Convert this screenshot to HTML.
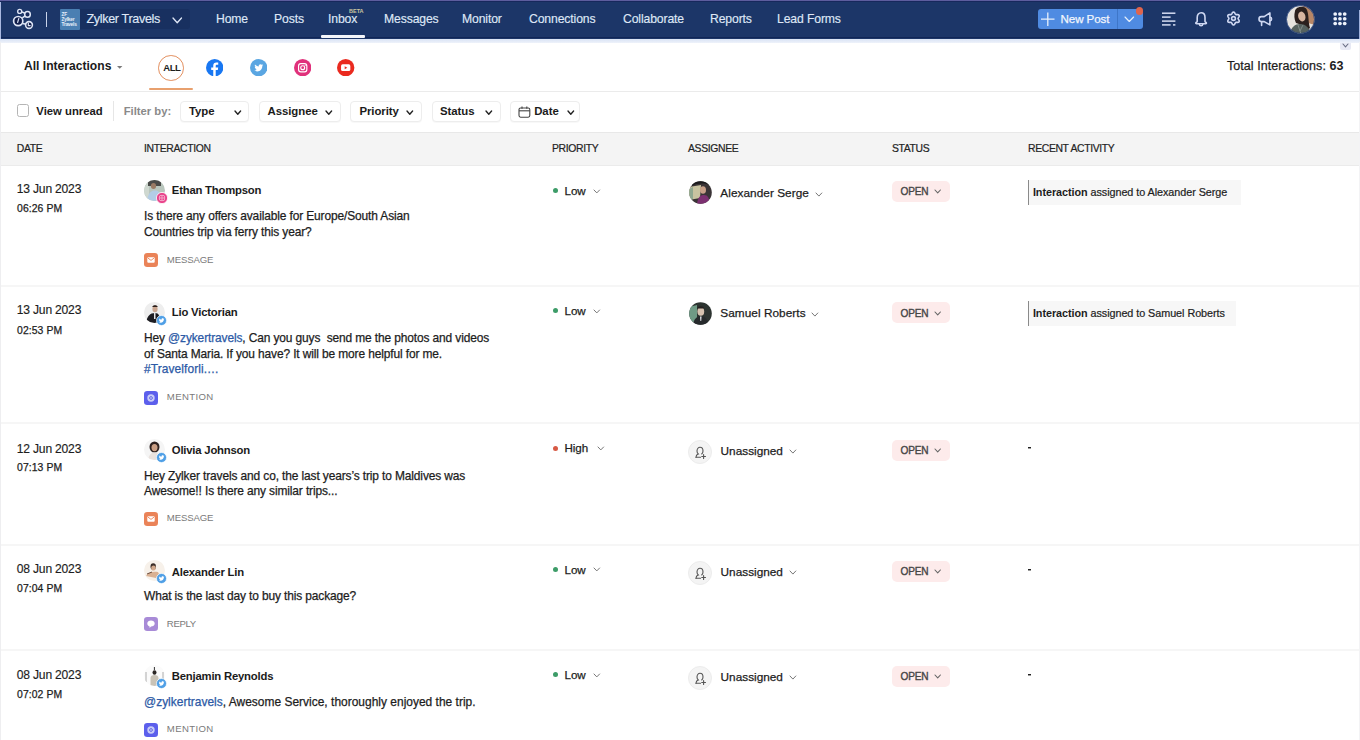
<!DOCTYPE html>
<html><head><meta charset="utf-8"><style>
*{margin:0;padding:0;box-sizing:border-box}
html,body{width:1360px;height:740px;overflow:hidden;background:#fff;font-family:"Liberation Sans",sans-serif;color:#1d1d1d}
.a{position:absolute;white-space:nowrap}
.nav{color:#dfe7f6;-webkit-text-stroke:0.15px #dfe7f6}
.b{font-weight:bold}
.m{-webkit-text-stroke:0.25px #1d1d1d}
.g{color:#7a7a7a}
.lnk{color:#2d5aa6;-webkit-text-stroke:0.25px #2d5aa6}
.btn{position:absolute;top:101px;height:21px;border:1px solid #ededed;border-radius:4px;background:#fff;box-shadow:0 1px 1px rgba(0,0,0,0.03)}
.th{color:#232323;-webkit-text-stroke:0.2px #232323}
.rb{position:absolute;left:0;width:1360px;height:2px;background:#f6f6f6}
.pill{position:absolute;left:892px;width:58px;height:21px;border-radius:5px;background:#fdebeb}
.act{position:absolute;left:1028px;height:25px;background:#f7f7f7;border-left:1.5px solid #8a8a8a}
.ua{position:absolute;left:688px;width:24px;height:24px;border-radius:50%;background:#f4f4f4;border:1px solid #ececec}
</style></head><body>
<div class="a" style="left:0;top:0;width:1360px;height:39px;background:#1c3668"></div>
<div class="a" style="left:0;top:0;width:1360px;height:1px;background:#5d5d9e"></div>
<div class="a" style="left:0;top:1px;width:1360px;height:1px;background:#17285c"></div>
<div class="a" style="left:0;top:36.8px;width:1360px;height:1.6px;background:#112657"></div>
<div class="a" style="left:0;top:38.5px;width:1360px;height:4px;background:linear-gradient(#d9e3f5,#eef2fa)"></div>
<div class="a" style="left:0;top:2px;width:1.2px;height:36.5px;background:#a9b8e0"></div>
<div class="a" style="left:1359px;top:10px;width:1px;height:29px;background:#9fb0dc"></div>
<svg class="a" style="left:10px;top:7px" width="26" height="24" viewBox="10 7 26 24">
<g fill="none" stroke="#dfe6f6" stroke-width="1.4">
<circle cx="18.2" cy="21.1" r="4.6" fill="#0f1c4a" stroke-width="1.7"/>
<circle cx="27.5" cy="14.4" r="2.8" fill="#16285a" stroke-width="1.5"/>
<circle cx="19.7" cy="11.4" r="2.0" fill="#16285a" stroke-width="1.4"/>
<circle cx="29" cy="25" r="3.4" fill="#0f1c4a" stroke-width="1.6"/>
<path d="M22.3 17.9 L25.2 15.9 M21.9 11.9 L24.9 13.3 M22.5 23.4 L26.2 24.3" stroke-width="1.5"/>
<path d="M18.9 18.2 L17.5 22.8" stroke-width="1.2"/>
<path d="M28.3 22.8 L28.3 25.6 L30.6 25.6" stroke-width="1.2"/>
</g></svg>
<div class="a" style="left:45.5px;top:12px;width:1.5px;height:15px;background:#c9d3ea"></div>
<div class="a" style="left:60px;top:9px;width:130px;height:20px;background:#183060;border-radius:3px"></div>
<div class="a" style="left:60px;top:9px;width:20px;height:21px;background:#4a7fb2;border-radius:1px"></div>
<div class="a" style="left:61.5px;top:11.5px;font-size:4.8px;line-height:5.2px;color:#e8f0fa;font-weight:bold;white-space:normal;width:18px;letter-spacing:-0.2px">ZF<br>Zylker<br>Travels</div>
<div class="a nav" style="left:86.5px;top:13.40px;font-size:12.6px;line-height:12.6px;letter-spacing:-0.35px">Zylker Travels</div>
<svg class="a" style="left:170.5px;top:16.3px" width="12.5" height="8.8"><path d="M2 2 L6.25 6.8 L10.5 2" fill="none" stroke="#dfe7f6" stroke-width="1.3" stroke-linecap="round" stroke-linejoin="round"/></svg>
<div class="a nav" style="left:216px;top:12.97px;font-size:12.2px;line-height:12.2px;letter-spacing:-0.12px">Home</div>
<div class="a nav" style="left:274px;top:12.97px;font-size:12.2px;line-height:12.2px;letter-spacing:-0.12px">Posts</div>
<div class="a nav" style="left:328px;top:12.97px;font-size:12.2px;line-height:12.2px;letter-spacing:-0.12px">Inbox</div>
<div class="a nav" style="left:384px;top:12.97px;font-size:12.2px;line-height:12.2px;letter-spacing:-0.12px">Messages</div>
<div class="a nav" style="left:462px;top:12.97px;font-size:12.2px;line-height:12.2px;letter-spacing:-0.12px">Monitor</div>
<div class="a nav" style="left:529px;top:12.97px;font-size:12.2px;line-height:12.2px;letter-spacing:-0.12px">Connections</div>
<div class="a nav" style="left:623px;top:12.97px;font-size:12.2px;line-height:12.2px;letter-spacing:-0.12px">Collaborate</div>
<div class="a nav" style="left:710px;top:12.97px;font-size:12.2px;line-height:12.2px;letter-spacing:-0.12px">Reports</div>
<div class="a nav" style="left:777px;top:12.97px;font-size:12.2px;line-height:12.2px;letter-spacing:-0.12px">Lead Forms</div>
<div class="a" style="left:349px;top:7.5px;font-size:5.5px;line-height:6px;color:#c9c6a0;font-weight:bold">BETA</div>
<div class="a" style="left:321px;top:35px;width:44px;height:3px;background:#f4f6fb;border-radius:1px"></div>
<div class="a" style="left:1038px;top:9px;width:105px;height:20px;background:#4f8be2;border-radius:3px"></div>
<div class="a" style="left:1117px;top:9px;width:1px;height:20px;background:#3e76c8"></div>
<svg class="a" style="left:1040px;top:12px" width="16" height="15"><path d="M1 7.2 H14.5 M7.8 0.5 V14" stroke="#e6effb" stroke-width="1.3"/></svg>
<div class="a nav" style="left:1060.6px;top:12.76px;font-size:11.6px;line-height:11.6px;color:#f2f6fc;letter-spacing:-0.1px;-webkit-text-stroke:0.25px #f2f6fc">New Post</div>
<svg class="a" style="left:1123px;top:14.899999999999999px" width="12.6" height="8.5"><path d="M2 2 L6.3 6.5 L10.6 2" fill="none" stroke="#e6effb" stroke-width="1.15" stroke-linecap="round" stroke-linejoin="round"/></svg>
<div class="a" style="left:1135.8px;top:7.3px;width:7.4px;height:7.4px;border-radius:50%;background:#e0644c"></div>
<svg class="a" style="left:1160px;top:11px" width="18" height="16"><g stroke="#d5ddf3" stroke-width="1.5">
<path d="M2 2.2 H15.4"/><path d="M2 6.1 H10.6"/><path d="M2 10.1 H15.4"/><path d="M2 13.9 H10.6"/><path d="M13 13.9 H15.4"/></g></svg>
<svg class="a" style="left:1193px;top:10px" width="16" height="18" viewBox="0 0 16 18"><g fill="none" stroke="#cfd8f2" stroke-width="1.6" stroke-linejoin="round" stroke-linecap="round">
<path d="M4.2 11.6 V7.4 C4.2 4.6 5.9 2.8 8.1 2.8 C10.3 2.8 12 4.6 12 7.4 V11.6 C12 12.1 13.2 12.4 13.4 13 C13.5 13.5 13.2 13.7 12.8 13.7 H3.4 C3 13.7 2.7 13.5 2.8 13 C3 12.4 4.2 12.1 4.2 11.6 Z"/>
<path d="M6.4 14.2 C6.5 15.3 7.2 15.8 8.1 15.8 C9 15.8 9.7 15.3 9.8 14.2"/></g></svg>
<svg class="a" style="left:1225.8px;top:11.4px" width="15" height="15"><g fill="none" stroke="#cfd8f2" stroke-width="1.6" stroke-linejoin="round">
<path d="M7.50 1.05 L8.05 1.20 L8.54 1.62 L8.92 2.19 L9.22 2.78 L9.48 3.26 L9.77 3.56 L10.18 3.67 L10.73 3.65 L11.39 3.61 L12.08 3.66 L12.68 3.87 L13.09 4.27 L13.23 4.83 L13.11 5.46 L12.81 6.08 L12.45 6.63 L12.16 7.09 L12.05 7.50 L12.16 7.91 L12.45 8.37 L12.81 8.92 L13.11 9.54 L13.23 10.17 L13.09 10.72 L12.68 11.13 L12.08 11.34 L11.39 11.39 L10.73 11.35 L10.18 11.33 L9.78 11.44 L9.48 11.74 L9.22 12.22 L8.92 12.81 L8.54 13.38 L8.05 13.80 L7.50 13.95 L6.95 13.80 L6.46 13.38 L6.08 12.81 L5.78 12.22 L5.52 11.74 L5.22 11.44 L4.82 11.33 L4.27 11.35 L3.61 11.39 L2.92 11.34 L2.32 11.13 L1.91 10.73 L1.77 10.17 L1.89 9.54 L2.19 8.92 L2.55 8.37 L2.84 7.91 L2.95 7.50 L2.84 7.09 L2.55 6.63 L2.19 6.08 L1.89 5.46 L1.77 4.83 L1.91 4.28 L2.32 3.87 L2.92 3.66 L3.61 3.61 L4.27 3.65 L4.82 3.67 L5.23 3.56 L5.52 3.26 L5.78 2.78 L6.08 2.19 L6.46 1.62 L6.95 1.20Z"/><circle cx="7.5" cy="7.5" r="1.9"/></g></svg>
<svg class="a" style="left:1257px;top:11px" width="17" height="17" viewBox="0 0 17 17"><g fill="none" stroke="#cfd8f2" stroke-width="1.6" stroke-linejoin="round" stroke-linecap="round">
<path d="M4.3 5.6 H7.2 L12.9 1.9 V13.9 L7.2 10.6 H4.3 C2.9 10.6 2 9.5 2 8.1 C2 6.7 2.9 5.6 4.3 5.6 Z"/>
<path d="M4.6 10.8 V14.4"/><path d="M13.3 6.3 C15 6.5 15 9.5 13.3 9.7"/></g></svg>
<svg class="a" style="left:1286px;top:5px" width="29" height="29" viewBox="0 0 29 29">
<defs><clipPath id="uc"><circle cx="14.5" cy="14.5" r="14"/></clipPath></defs>
<g clip-path="url(#uc)">
<rect width="29" height="29" fill="#e6e3de"/>
<path d="M16 0 H29 V20 L22 18 Z" fill="#b78767"/>
<path d="M9 6 C10 1 19 0 21 5 C23 10 22 16 24 23 L20 26 L16 20 L10 18 C8 14 8 10 9 6Z" fill="#2b201d"/>
<ellipse cx="15.8" cy="11.5" rx="3.6" ry="5" fill="#d8b6a0" transform="rotate(-15 15.8 11.5)"/>
<path d="M4 29 C5 22 9 19 14 19 C19 19 23 22 25 29 Z" fill="#56625f"/>
<path d="M12 20 L15 29 M17 20 L14 26" stroke="#8d9894" stroke-width="0.8"/></g><circle cx="14.5" cy="14.5" r="14" fill="none" stroke="#24407a" stroke-width="0.8"/></svg>
<svg class="a" style="left:1333.4px;top:12.0px" width="16" height="16"><circle cx="2.2" cy="2.0" r="1.85" fill="#eef2fb"/><circle cx="6.95" cy="2.0" r="1.85" fill="#eef2fb"/><circle cx="11.7" cy="2.0" r="1.85" fill="#eef2fb"/><circle cx="2.2" cy="6.75" r="1.85" fill="#eef2fb"/><circle cx="6.95" cy="6.75" r="1.85" fill="#eef2fb"/><circle cx="11.7" cy="6.75" r="1.85" fill="#eef2fb"/><circle cx="2.2" cy="11.5" r="1.85" fill="#eef2fb"/><circle cx="6.95" cy="11.5" r="1.85" fill="#eef2fb"/><circle cx="11.7" cy="11.5" r="1.85" fill="#eef2fb"/></svg>
<div class="a" style="left:1340px;top:42.5px;width:11px;height:7px;background:#e7e9f4;border-radius:0 0 2px 2px"></div>
<svg class="a" style="left:1341px;top:42.3px" width="9" height="6.8"><path d="M2 2 L4.5 4.8 L7 2" fill="none" stroke="#6a6f85" stroke-width="1.1" stroke-linecap="round" stroke-linejoin="round"/></svg>
<div class="a b" style="left:24px;top:60.28px;font-size:12.1px;line-height:12.1px;letter-spacing:0px;color:#1b1b1b">All Interactions</div>
<svg class="a" style="left:117px;top:65.5px" width="6" height="3"><path d="M0 0 H5.4 L2.7 2.8Z" fill="#7a7a7a"/></svg>
<div class="a" style="left:158.1px;top:54.9px;width:25.7px;height:25.7px;border-radius:50%;border:1.7px solid #e39060"></div>
<div class="a b" style="left:163.3px;top:62.79px;font-size:9.5px;line-height:9.5px;letter-spacing:-0.45px;color:#1d1d1d">ALL</div>
<div class="a" style="left:149.4px;top:88.2px;width:43.2px;height:2.2px;background:#e8a06e;border-radius:1px"></div>
<svg class="a" style="left:206px;top:59px" width="17.4" height="17.4" viewBox="0 0 24 24">
<circle cx="12" cy="12" r="12" fill="#1877f2"/>
<path d="M13.4 24 V15.2 H16.3 L16.8 11.8 H13.4 V9.7 C13.4 8.7 13.8 8 15.2 8 H16.9 V5 C16.4 4.9 15.3 4.8 14.2 4.8 C11.7 4.8 10 6.3 10 9.1 V11.8 H7.2 V15.2 H10 V24 Z" fill="#fff"/></svg>
<svg class="a" style="left:250px;top:59px" width="17.4" height="17.4" viewBox="0 0 24 24">
<circle cx="12" cy="12" r="12" fill="#5aa6e2"/>
<path d="M18.2 8.4 C17.8 8.6 17.3 8.7 16.8 8.8 C17.3 8.5 17.7 8 17.9 7.4 C17.4 7.7 16.9 7.9 16.3 8 C15.8 7.5 15.2 7.2 14.5 7.2 C13.1 7.2 12 8.3 12 9.7 C12 9.9 12 10.1 12.1 10.3 C10 10.2 8.2 9.2 6.9 7.7 C6.7 8.1 6.6 8.5 6.6 8.9 C6.6 9.8 7 10.5 7.7 11 C7.3 11 6.9 10.9 6.5 10.7 C6.5 11.9 7.4 12.9 8.5 13.1 C8.1 13.2 7.7 13.3 7.4 13.2 C7.7 14.2 8.6 14.9 9.7 14.9 C8.8 15.6 7.7 16 6.6 16 C6.4 16 6.2 16 6 16 C7.1 16.7 8.4 17.1 9.9 17.1 C14.5 17.1 17 13.3 17 10 V9.7 C17.4 9.3 17.8 8.9 18.2 8.4 Z" fill="#fff"/></svg>
<svg class="a" style="left:293.7px;top:59px" width="17.4" height="17.4" viewBox="0 0 24 24">
<circle cx="12" cy="12" r="12" fill="#e0317b"/>
<rect x="6.3" y="6.3" width="11.4" height="11.4" rx="3.2" fill="none" stroke="#fff" stroke-width="1.6"/>
<circle cx="12" cy="12" r="2.7" fill="none" stroke="#fff" stroke-width="1.6"/>
<circle cx="15.3" cy="8.7" r="0.8" fill="#fff"/></svg>
<svg class="a" style="left:337.2px;top:59px" width="17.4" height="17.4" viewBox="0 0 24 24">
<circle cx="12" cy="12" r="12" fill="#ea2a1f"/>
<rect x="5.6" y="7.4" width="12.8" height="9.2" rx="2.2" fill="#fff"/>
<path d="M10.6 9.9 L14.2 12 L10.6 14.1Z" fill="#ea2a1f"/></svg>
<div class="a m" style="left:1227px;top:60.22px;font-size:12.5px;line-height:12.5px;letter-spacing:0.05px">Total Interactions: <b style="-webkit-text-stroke:0">63</b></div>
<div class="a" style="left:0;top:90.5px;width:1360px;height:1.5px;background:#ebebeb"></div>
<div class="a" style="left:16.8px;top:104.4px;width:12.2px;height:12.2px;border:1.2px solid #b5b5b5;border-radius:2.5px"></div>
<div class="a b" style="left:36.3px;top:105.81px;font-size:11.3px;line-height:11.3px;color:#1b1b1b">View unread</div>
<div class="a" style="left:112.5px;top:100.5px;width:1px;height:20px;background:#e6e6e6"></div>
<div class="a b" style="left:123.7px;top:105.82px;font-size:11.25px;line-height:11.25px;color:#8a8a8a">Filter by:</div>
<div class="btn" style="left:180px;width:69.0px"></div>
<div class="a b" style="left:189px;top:105.79px;font-size:11.4px;line-height:11.4px;letter-spacing:-0.05px;color:#1b1b1b">Type</div>
<svg class="a" style="left:232.70000000000002px;top:108.9px" width="9.6" height="7.2"><path d="M2 2 L4.8 5.2 L7.6 2" fill="none" stroke="#222" stroke-width="1.35" stroke-linecap="round" stroke-linejoin="round"/></svg>
<div class="btn" style="left:258.5px;width:82.5px"></div>
<div class="a b" style="left:267.5px;top:105.79px;font-size:11.4px;line-height:11.4px;letter-spacing:-0.05px;color:#1b1b1b">Assignee</div>
<svg class="a" style="left:323.90000000000003px;top:108.9px" width="9.6" height="7.2"><path d="M2 2 L4.8 5.2 L7.6 2" fill="none" stroke="#222" stroke-width="1.35" stroke-linecap="round" stroke-linejoin="round"/></svg>
<div class="btn" style="left:350.4px;width:72.1px"></div>
<div class="a b" style="left:359.4px;top:105.79px;font-size:11.4px;line-height:11.4px;letter-spacing:-0.05px;color:#1b1b1b">Priority</div>
<svg class="a" style="left:405.3px;top:108.9px" width="9.6" height="7.2"><path d="M2 2 L4.8 5.2 L7.6 2" fill="none" stroke="#222" stroke-width="1.35" stroke-linecap="round" stroke-linejoin="round"/></svg>
<div class="btn" style="left:431.5px;width:69.5px"></div>
<div class="a b" style="left:440px;top:105.79px;font-size:11.4px;line-height:11.4px;letter-spacing:-0.05px;color:#1b1b1b">Status</div>
<svg class="a" style="left:483.8px;top:108.9px" width="9.6" height="7.2"><path d="M2 2 L4.8 5.2 L7.6 2" fill="none" stroke="#222" stroke-width="1.35" stroke-linecap="round" stroke-linejoin="round"/></svg>
<div class="btn" style="left:510.4px;width:69.7px"></div>
<div class="a b" style="left:534.2px;top:105.79px;font-size:11.4px;line-height:11.4px;letter-spacing:-0.05px;color:#1b1b1b">Date</div>
<svg class="a" style="left:565.8px;top:108.9px" width="9.6" height="7.2"><path d="M2 2 L4.8 5.2 L7.6 2" fill="none" stroke="#222" stroke-width="1.35" stroke-linecap="round" stroke-linejoin="round"/></svg>
<svg class="a" style="left:517.5px;top:105.5px" width="13" height="12" viewBox="0 0 13 12"><g fill="none" stroke="#444" stroke-width="1.1">
<rect x="1" y="2" width="10.8" height="9.2" rx="1.6"/><path d="M1 4.8 H11.8"/><path d="M4 0.6 V2.8 M8.8 0.6 V2.8"/></g></svg>
<div class="a" style="left:0;top:132px;width:1360px;height:34px;background:#f4f4f4;border-top:1px solid #e8e8e8;border-bottom:1px solid #ebebeb"></div>
<div class="a th" style="left:16.8px;top:143.55px;font-size:10.4px;line-height:10.4px;letter-spacing:-0.35px">DATE</div>
<div class="a th" style="left:144px;top:143.55px;font-size:10.4px;line-height:10.4px;letter-spacing:-0.35px">INTERACTION</div>
<div class="a th" style="left:552px;top:143.55px;font-size:10.4px;line-height:10.4px;letter-spacing:-0.35px">PRIORITY</div>
<div class="a th" style="left:688px;top:143.55px;font-size:10.4px;line-height:10.4px;letter-spacing:-0.35px">ASSIGNEE</div>
<div class="a th" style="left:892px;top:143.55px;font-size:10.4px;line-height:10.4px;letter-spacing:-0.35px">STATUS</div>
<div class="a th" style="left:1028px;top:143.55px;font-size:10.4px;line-height:10.4px;letter-spacing:-0.35px">RECENT ACTIVITY</div>
<div class="rb" style="top:285px"></div>
<div class="rb" style="top:422px"></div>
<div class="rb" style="top:544px"></div>
<div class="rb" style="top:649px"></div>
<div class="a " style="left:16.8px;top:182.98px;font-size:12.1px;line-height:12.1px;letter-spacing:-0.2px;-webkit-text-stroke:0.15px #1d1d1d">13 Jun 2023</div>
<div class="a m" style="left:17px;top:204.05px;font-size:10.4px;line-height:10.4px;letter-spacing:0.1px">06:26 PM</div>
<div class="a" style="left:144px;top:180px;width:21px;height:21px"><svg width="21" height="21" viewBox="0 0 21 21"><defs><clipPath id="a1"><circle cx="10.5" cy="10.5" r="10.5"/></clipPath></defs><g clip-path="url(#a1)"><rect width="21" height="21" fill="#b9c6bd"/><rect x="0" y="0" width="5" height="21" fill="#cfd8d0"/><path d="M4 0 H17 V6 H4Z" fill="#4a4a48"/><ellipse cx="9.5" cy="6" rx="2.6" ry="3" fill="#9a7a64"/><path d="M3 21 C4 13 7 10.5 11 10.5 C15 10.5 17 13 18 21Z" fill="#b3cde6"/></g></svg></div>
<svg class="a" style="left:155.5px;top:192.2px" width="12" height="12" viewBox="0 0 12 12"><circle cx="6" cy="6" r="5.6" fill="#e9428a" stroke="#fff" stroke-width="0.8"/>
<rect x="3.4" y="3.4" width="5.2" height="5.2" rx="1.5" fill="none" stroke="#f8c6dc" stroke-width="0.8"/><circle cx="6" cy="6" r="1.2" fill="none" stroke="#f8c6dc" stroke-width="0.8"/></svg>
<div class="a b" style="left:171.8px;top:185.11px;font-size:11.3px;line-height:11.3px;letter-spacing:-0.2px;color:#1b1b1b">Ethan Thompson</div>
<div class="a m" style="left:144px;top:211.01px;font-size:11.95px;line-height:11.95px;letter-spacing:-0.12px">Is there any offers available for Europe/South Asian</div>
<div class="a m" style="left:144px;top:226.61px;font-size:11.95px;line-height:11.95px;letter-spacing:-0.12px">Countries trip via ferry this year?</div>
<svg class="a" style="left:144px;top:253.4px" width="14" height="14" viewBox="0 0 14 14"><rect width="14" height="14" rx="3.2" fill="#ea8358"/>
<rect x="3.3" y="4.2" width="7.4" height="5.6" rx="1" fill="#fff"/><path d="M3.6 4.8 L7 7.4 L10.4 4.8" fill="none" stroke="#ea8358" stroke-width="0.9"/></svg>
<div class="a g" style="left:166.8px;top:255.08px;font-size:9.6px;line-height:9.6px;letter-spacing:-0.15px">MESSAGE</div>
<div class="a" style="left:552.5px;top:188.0px;width:5px;height:5px;border-radius:50%;background:#3d9c68"></div>
<div class="a m" style="left:564.6px;top:184.86px;font-size:11.6px;line-height:11.6px;letter-spacing:-0.1px">Low</div>
<svg class="a" style="left:592.3px;top:187.5px" width="9.6" height="6.9"><path d="M2 2 L4.8 4.9 L7.6 2" fill="none" stroke="#777" stroke-width="1" stroke-linecap="round" stroke-linejoin="round"/></svg>
<div class="a" style="left:688.6px;top:181.2px"><svg width="23" height="23" viewBox="0 0 23 23"><defs><clipPath id="s1"><circle cx="11.5" cy="11.5" r="11.3"/></clipPath></defs><g clip-path="url(#s1)"><rect width="23" height="23" fill="#3a3436"/><path d="M0 6 L12 4 L11 17 L0 19Z" fill="#c8c3a0"/><path d="M0 8 L4 6 L4 18 L0 19Z" fill="#8fa890"/><ellipse cx="14" cy="9" rx="3" ry="3.8" fill="#c9a088"/><path d="M8 23 C9 16 11 14 15 14 C19 14 20 17 21 23Z" fill="#7c3070"/><path d="M3 0 H20 V4 C16 2 8 2 3 5Z" fill="#1b1b1d"/></g></svg></div>
<div class="a m" style="left:720.3px;top:187.83px;font-size:11.8px;line-height:11.8px;letter-spacing:0.05px">Alexander Serge</div>
<svg class="a" style="left:813.5px;top:190.9px" width="9.8" height="7.1"><path d="M2 2 L4.9 5.1 L7.8 2" fill="none" stroke="#777" stroke-width="1" stroke-linecap="round" stroke-linejoin="round"/></svg>
<div class="pill" style="top:180.7px"></div>
<div class="a " style="left:900.6px;top:187.20px;font-size:10.1px;line-height:10.1px;color:#454545;letter-spacing:-0.2px;-webkit-text-stroke:0.35px #454545">OPEN</div>
<svg class="a" style="left:932.6px;top:188.10000000000002px" width="9.4" height="6.9"><path d="M2 2 L4.7 4.9 L7.4 2" fill="none" stroke="#666" stroke-width="1.1" stroke-linecap="round" stroke-linejoin="round"/></svg>
<div class="act" style="top:180.2px;width:212.7px"></div>
<div class="a m" style="left:1032.9px;top:187.19px;font-size:10.8px;line-height:10.8px;letter-spacing:-0.05px;-webkit-text-stroke:0.2px #1d1d1d"><b style="-webkit-text-stroke:0">Interaction</b> assigned to Alexander Serge</div>
<div class="a " style="left:16.8px;top:304.28px;font-size:12.1px;line-height:12.1px;letter-spacing:-0.2px;-webkit-text-stroke:0.15px #1d1d1d">13 Jun 2023</div>
<div class="a m" style="left:17px;top:325.65px;font-size:10.4px;line-height:10.4px;letter-spacing:0.1px">02:53 PM</div>
<div class="a" style="left:144px;top:302px;width:21px;height:21px"><svg width="21" height="21" viewBox="0 0 21 21"><defs><clipPath id="a2"><circle cx="10.5" cy="10.5" r="10.5"/></clipPath></defs><g clip-path="url(#a2)"><rect width="21" height="21" fill="#eeeeee"/><ellipse cx="11" cy="7" rx="2.6" ry="3.3" fill="#caa58f"/><path d="M8.3 5 C8.5 2.6 13.6 2.6 13.7 5Z" fill="#2a1e1a"/><path d="M2 21 C3 14 6 11 11 11 C15 11 16 14 16 21Z" fill="#1d1d22"/><path d="M10 11 L11.5 11 L11.5 17 L10 17Z" fill="#e8e8ea"/></g></svg></div>
<svg class="a" style="left:156.0px;top:314.7px" width="11" height="11" viewBox="0 0 24 24"><circle cx="12" cy="12" r="11" fill="#4f9fe6" stroke="#fff" stroke-width="1.5"/>
<path d="M18.2 8.4 C17.8 8.6 17.3 8.7 16.8 8.8 C17.3 8.5 17.7 8 17.9 7.4 C17.4 7.7 16.9 7.9 16.3 8 C15.8 7.5 15.2 7.2 14.5 7.2 C13.1 7.2 12 8.3 12 9.7 C12 9.9 12 10.1 12.1 10.3 C10 10.2 8.2 9.2 6.9 7.7 C6.7 8.1 6.6 8.5 6.6 8.9 C6.6 9.8 7 10.5 7.7 11 C7.3 11 6.9 10.9 6.5 10.7 C6.5 11.9 7.4 12.9 8.5 13.1 C8.1 13.2 7.7 13.3 7.4 13.2 C7.7 14.2 8.6 14.9 9.7 14.9 C8.8 15.6 7.7 16 6.6 16 C6.4 16 6.2 16 6 16 C7.1 16.7 8.4 17.1 9.9 17.1 C14.5 17.1 17 13.3 17 10 V9.7 C17.4 9.3 17.8 8.9 18.2 8.4 Z" fill="#fff"/></svg>
<div class="a b" style="left:171.8px;top:307.01px;font-size:11.3px;line-height:11.3px;letter-spacing:-0.2px;color:#1b1b1b">Lio Victorian</div>
<div class="a m" style="left:144px;top:333.41px;font-size:11.95px;line-height:11.95px;letter-spacing:-0.12px">Hey <span class="lnk">@zykertravels</span>, Can you guys&nbsp; send me the photos and videos</div>
<div class="a m" style="left:144px;top:348.81px;font-size:11.95px;line-height:11.95px;letter-spacing:-0.12px">of Santa Maria. If you have? It will be more helpful for me.</div>
<div class="a m" style="left:144px;top:364.41px;font-size:11.95px;line-height:11.95px;letter-spacing:-0.12px"><span class="lnk" style="letter-spacing:0.1px">#Travelforli</span><span class="lnk" style="letter-spacing:0.45px">....</span></div>
<svg class="a" style="left:144px;top:391px" width="14" height="14" viewBox="0 0 14 14"><rect width="14" height="14" rx="3.2" fill="#5c5fec"/>
<circle cx="7" cy="7" r="3.7" fill="#c9cdf7"/><circle cx="7" cy="7" r="1.4" fill="none" stroke="#5a5fe2" stroke-width="0.9"/></svg>
<div class="a g" style="left:166.8px;top:392.08px;font-size:9.6px;line-height:9.6px;letter-spacing:0.35px">MENTION</div>
<div class="a" style="left:552.5px;top:308.1px;width:5px;height:5px;border-radius:50%;background:#3d9c68"></div>
<div class="a m" style="left:564.6px;top:304.96px;font-size:11.6px;line-height:11.6px;letter-spacing:-0.1px">Low</div>
<svg class="a" style="left:592.3px;top:307.6px" width="9.6" height="6.9"><path d="M2 2 L4.8 4.9 L7.6 2" fill="none" stroke="#777" stroke-width="1" stroke-linecap="round" stroke-linejoin="round"/></svg>
<div class="a" style="left:688.6px;top:302.4px"><svg width="23" height="23" viewBox="0 0 23 23"><defs><clipPath id="s2"><circle cx="11.5" cy="11.5" r="11.3"/></clipPath></defs><g clip-path="url(#s2)"><rect width="23" height="23" fill="#2d3431"/><path d="M0 5 L8 3 L8 20 L0 20Z" fill="#6f9a85"/><ellipse cx="11.8" cy="9.5" rx="3.4" ry="4.3" fill="#d6c2b0"/><path d="M8.3 6.5 C8.5 3.5 15 3.5 15.2 6.5Z" fill="#262020"/><path d="M4 23 C5 16 8 14.5 11.8 14.5 C15.6 14.5 18.5 16 19.5 23Z" fill="#262a2c"/><path d="M11 14.5 L12.6 14.5 L12.2 19 L11.4 19Z" fill="#e4e6ea"/></g></svg></div>
<div class="a m" style="left:720.3px;top:307.93px;font-size:11.8px;line-height:11.8px;letter-spacing:0.05px">Samuel Roberts</div>
<svg class="a" style="left:810.0px;top:311.0px" width="9.8" height="7.1"><path d="M2 2 L4.9 5.1 L7.8 2" fill="none" stroke="#777" stroke-width="1" stroke-linecap="round" stroke-linejoin="round"/></svg>
<div class="pill" style="top:302.2px"></div>
<div class="a " style="left:900.6px;top:308.60px;font-size:10.1px;line-height:10.1px;color:#454545;letter-spacing:-0.2px;-webkit-text-stroke:0.35px #454545">OPEN</div>
<svg class="a" style="left:932.6px;top:309.5px" width="9.4" height="6.9"><path d="M2 2 L4.7 4.9 L7.4 2" fill="none" stroke="#666" stroke-width="1.1" stroke-linecap="round" stroke-linejoin="round"/></svg>
<div class="act" style="top:301.2px;width:208px"></div>
<div class="a m" style="left:1032.9px;top:308.09px;font-size:10.8px;line-height:10.8px;letter-spacing:-0.05px;-webkit-text-stroke:0.2px #1d1d1d"><b style="-webkit-text-stroke:0">Interaction</b> assigned to Samuel Roberts</div>
<div class="a " style="left:16.8px;top:442.58px;font-size:12.1px;line-height:12.1px;letter-spacing:-0.2px;-webkit-text-stroke:0.15px #1d1d1d">12 Jun 2023</div>
<div class="a m" style="left:17px;top:462.85px;font-size:10.4px;line-height:10.4px;letter-spacing:0.1px">07:13 PM</div>
<div class="a" style="left:144px;top:439.4px;width:21px;height:21px"><svg width="21" height="21" viewBox="0 0 21 21"><defs><clipPath id="a3"><circle cx="10.5" cy="10.5" r="10.5"/></clipPath></defs><g clip-path="url(#a3)"><rect width="21" height="21" fill="#f5f5f5"/><ellipse cx="10.5" cy="8" rx="5" ry="5.6" fill="#2e2220"/><ellipse cx="10.5" cy="8.6" rx="3" ry="3.7" fill="#c99e84"/><path d="M4 21 C5 15 8 13.5 10.5 13.5 C13 13.5 16 15 17 21Z" fill="#e9e2de"/></g></svg></div>
<svg class="a" style="left:156.0px;top:452.09999999999997px" width="11" height="11" viewBox="0 0 24 24"><circle cx="12" cy="12" r="11" fill="#4f9fe6" stroke="#fff" stroke-width="1.5"/>
<path d="M18.2 8.4 C17.8 8.6 17.3 8.7 16.8 8.8 C17.3 8.5 17.7 8 17.9 7.4 C17.4 7.7 16.9 7.9 16.3 8 C15.8 7.5 15.2 7.2 14.5 7.2 C13.1 7.2 12 8.3 12 9.7 C12 9.9 12 10.1 12.1 10.3 C10 10.2 8.2 9.2 6.9 7.7 C6.7 8.1 6.6 8.5 6.6 8.9 C6.6 9.8 7 10.5 7.7 11 C7.3 11 6.9 10.9 6.5 10.7 C6.5 11.9 7.4 12.9 8.5 13.1 C8.1 13.2 7.7 13.3 7.4 13.2 C7.7 14.2 8.6 14.9 9.7 14.9 C8.8 15.6 7.7 16 6.6 16 C6.4 16 6.2 16 6 16 C7.1 16.7 8.4 17.1 9.9 17.1 C14.5 17.1 17 13.3 17 10 V9.7 C17.4 9.3 17.8 8.9 18.2 8.4 Z" fill="#fff"/></svg>
<div class="a b" style="left:171.8px;top:444.71px;font-size:11.3px;line-height:11.3px;letter-spacing:-0.2px;color:#1b1b1b">Olivia Johnson</div>
<div class="a m" style="left:144px;top:470.71px;font-size:11.95px;line-height:11.95px;letter-spacing:-0.12px">Hey Zylker travels and co, the last years’s trip to Maldives was</div>
<div class="a m" style="left:144px;top:485.61px;font-size:11.95px;line-height:11.95px;letter-spacing:-0.12px">Awesome!! Is there any similar trips...</div>
<svg class="a" style="left:144px;top:512px" width="14" height="14" viewBox="0 0 14 14"><rect width="14" height="14" rx="3.2" fill="#ea8358"/>
<rect x="3.3" y="4.2" width="7.4" height="5.6" rx="1" fill="#fff"/><path d="M3.6 4.8 L7 7.4 L10.4 4.8" fill="none" stroke="#ea8358" stroke-width="0.9"/></svg>
<div class="a g" style="left:166.8px;top:513.48px;font-size:9.6px;line-height:9.6px;letter-spacing:-0.15px">MESSAGE</div>
<div class="a" style="left:552.5px;top:445.5px;width:5px;height:5px;border-radius:50%;background:#d75a45"></div>
<div class="a m" style="left:564.6px;top:442.36px;font-size:11.6px;line-height:11.6px;letter-spacing:-0.1px">High</div>
<svg class="a" style="left:595.9px;top:445.0px" width="9.6" height="6.9"><path d="M2 2 L4.8 4.9 L7.6 2" fill="none" stroke="#777" stroke-width="1" stroke-linecap="round" stroke-linejoin="round"/></svg>
<div class="ua" style="top:440px"></div>
<svg class="a" style="left:694px;top:446px" width="13" height="13" viewBox="0 0 13 13"><g fill="none" stroke="#555" stroke-width="1.1" stroke-linecap="round">
<path d="M2 11.2 C2 9.4 3 8.4 4.3 8 C3.3 7.2 3 6.2 3 5 C3 2.8 4.4 1.2 6 1.2 C7.6 1.2 9 2.8 9 5 C9 6.2 8.7 7.2 7.7 8"/>
<path d="M2 11.2 H6.5"/><path d="M9.6 8.6 V12.4 M7.7 10.5 H11.5"/></g></svg>
<div class="a m" style="left:720.6px;top:446.13px;font-size:11.8px;line-height:11.8px;letter-spacing:0px">Unassigned</div>
<svg class="a" style="left:788px;top:448.2px" width="9.8" height="7.1"><path d="M2 2 L4.9 5.1 L7.8 2" fill="none" stroke="#777" stroke-width="1" stroke-linecap="round" stroke-linejoin="round"/></svg>
<div class="pill" style="top:440px"></div>
<div class="a " style="left:900.6px;top:446.20px;font-size:10.1px;line-height:10.1px;color:#454545;letter-spacing:-0.2px;-webkit-text-stroke:0.35px #454545">OPEN</div>
<svg class="a" style="left:932.6px;top:447.1px" width="9.4" height="6.9"><path d="M2 2 L4.7 4.9 L7.4 2" fill="none" stroke="#666" stroke-width="1.1" stroke-linecap="round" stroke-linejoin="round"/></svg>
<div class="a" style="left:1028px;top:447px;width:3px;height:1px;background:#222"></div><div class="a" style="left:1028px;top:448px;width:3px;height:1px;background:#999"></div>
<div class="a " style="left:16.8px;top:563.08px;font-size:12.1px;line-height:12.1px;letter-spacing:-0.2px;-webkit-text-stroke:0.15px #1d1d1d">08 Jun 2023</div>
<div class="a m" style="left:17px;top:584.25px;font-size:10.4px;line-height:10.4px;letter-spacing:0.1px">07:04 PM</div>
<div class="a" style="left:144px;top:560.3px;width:21px;height:21px"><svg width="21" height="21" viewBox="0 0 21 21"><defs><clipPath id="a4"><circle cx="10.5" cy="10.5" r="10.5"/></clipPath></defs><g clip-path="url(#a4)"><rect width="21" height="21" fill="#f7f1ea"/><ellipse cx="9.2" cy="6.5" rx="2.7" ry="3.2" fill="#3a2c26"/><ellipse cx="9.5" cy="8" rx="2.3" ry="2.6" fill="#d3a98c"/><path d="M2 16 C4 12 9 11 14 12 L16 16 L12 18 Z" fill="#d9b193"/><path d="M3 14 L8 12" stroke="#6a4a3a" stroke-width="1"/></g></svg></div>
<svg class="a" style="left:156.0px;top:573.0px" width="11" height="11" viewBox="0 0 24 24"><circle cx="12" cy="12" r="11" fill="#4f9fe6" stroke="#fff" stroke-width="1.5"/>
<path d="M18.2 8.4 C17.8 8.6 17.3 8.7 16.8 8.8 C17.3 8.5 17.7 8 17.9 7.4 C17.4 7.7 16.9 7.9 16.3 8 C15.8 7.5 15.2 7.2 14.5 7.2 C13.1 7.2 12 8.3 12 9.7 C12 9.9 12 10.1 12.1 10.3 C10 10.2 8.2 9.2 6.9 7.7 C6.7 8.1 6.6 8.5 6.6 8.9 C6.6 9.8 7 10.5 7.7 11 C7.3 11 6.9 10.9 6.5 10.7 C6.5 11.9 7.4 12.9 8.5 13.1 C8.1 13.2 7.7 13.3 7.4 13.2 C7.7 14.2 8.6 14.9 9.7 14.9 C8.8 15.6 7.7 16 6.6 16 C6.4 16 6.2 16 6 16 C7.1 16.7 8.4 17.1 9.9 17.1 C14.5 17.1 17 13.3 17 10 V9.7 C17.4 9.3 17.8 8.9 18.2 8.4 Z" fill="#fff"/></svg>
<div class="a b" style="left:171.8px;top:567.31px;font-size:11.3px;line-height:11.3px;letter-spacing:-0.2px;color:#1b1b1b">Alexander Lin</div>
<div class="a m" style="left:144px;top:591.01px;font-size:11.95px;line-height:11.95px;letter-spacing:-0.12px">What is the last day to buy this package?</div>
<svg class="a" style="left:144px;top:617.4px" width="14" height="14" viewBox="0 0 14 14"><rect width="14" height="14" rx="3.2" fill="#a88bd7"/>
<path d="M3.3 6.6 C3.3 4.6 5 3.6 7 3.6 C9 3.6 10.7 4.6 10.7 6.6 C10.7 8.6 9 9.6 7 9.6 L5.6 10.9 L5.6 9.4 C4.2 9 3.3 8 3.3 6.6Z" fill="#fff"/></svg>
<div class="a g" style="left:166.8px;top:618.68px;font-size:9.6px;line-height:9.6px;letter-spacing:-0.35px">REPLY</div>
<div class="a" style="left:552.5px;top:566.8px;width:5px;height:5px;border-radius:50%;background:#3d9c68"></div>
<div class="a m" style="left:564.6px;top:563.66px;font-size:11.6px;line-height:11.6px;letter-spacing:-0.1px">Low</div>
<svg class="a" style="left:592.3px;top:566.3px" width="9.6" height="6.9"><path d="M2 2 L4.8 4.9 L7.6 2" fill="none" stroke="#777" stroke-width="1" stroke-linecap="round" stroke-linejoin="round"/></svg>
<div class="ua" style="top:561px"></div>
<svg class="a" style="left:694px;top:567px" width="13" height="13" viewBox="0 0 13 13"><g fill="none" stroke="#555" stroke-width="1.1" stroke-linecap="round">
<path d="M2 11.2 C2 9.4 3 8.4 4.3 8 C3.3 7.2 3 6.2 3 5 C3 2.8 4.4 1.2 6 1.2 C7.6 1.2 9 2.8 9 5 C9 6.2 8.7 7.2 7.7 8"/>
<path d="M2 11.2 H6.5"/><path d="M9.6 8.6 V12.4 M7.7 10.5 H11.5"/></g></svg>
<div class="a m" style="left:720.6px;top:566.73px;font-size:11.8px;line-height:11.8px;letter-spacing:0px">Unassigned</div>
<svg class="a" style="left:788px;top:568.8px" width="9.8" height="7.1"><path d="M2 2 L4.9 5.1 L7.8 2" fill="none" stroke="#777" stroke-width="1" stroke-linecap="round" stroke-linejoin="round"/></svg>
<div class="pill" style="top:561.2px"></div>
<div class="a " style="left:900.6px;top:567.40px;font-size:10.1px;line-height:10.1px;color:#454545;letter-spacing:-0.2px;-webkit-text-stroke:0.35px #454545">OPEN</div>
<svg class="a" style="left:932.6px;top:568.3px" width="9.4" height="6.9"><path d="M2 2 L4.7 4.9 L7.4 2" fill="none" stroke="#666" stroke-width="1.1" stroke-linecap="round" stroke-linejoin="round"/></svg>
<div class="a" style="left:1028px;top:569px;width:3px;height:1px;background:#222"></div><div class="a" style="left:1028px;top:570px;width:3px;height:1px;background:#999"></div>
<div class="a " style="left:16.8px;top:668.58px;font-size:12.1px;line-height:12.1px;letter-spacing:-0.2px;-webkit-text-stroke:0.15px #1d1d1d">08 Jun 2023</div>
<div class="a m" style="left:17px;top:689.65px;font-size:10.4px;line-height:10.4px;letter-spacing:0.1px">07:02 PM</div>
<div class="a" style="left:144px;top:665.3px;width:21px;height:21px"><svg width="21" height="21" viewBox="0 0 21 21"><defs><clipPath id="a5"><circle cx="10.5" cy="10.5" r="10.5"/></clipPath></defs><g clip-path="url(#a5)"><rect width="21" height="21" fill="#fbfbfb"/><path d="M2 7 V17 M19 7 V17" stroke="#9a9a9a" stroke-width="0.8"/><ellipse cx="10.5" cy="7.5" rx="2" ry="2.3" fill="#2b2624"/><path d="M10.4 2 V5" stroke="#333" stroke-width="1"/><path d="M6.5 21 V13 C6.5 11 8 10 10.5 10 C13 10 14.5 11 14.5 13 V21Z" fill="#c9c3b7"/></g></svg></div>
<svg class="a" style="left:156.0px;top:678.0px" width="11" height="11" viewBox="0 0 24 24"><circle cx="12" cy="12" r="11" fill="#4f9fe6" stroke="#fff" stroke-width="1.5"/>
<path d="M18.2 8.4 C17.8 8.6 17.3 8.7 16.8 8.8 C17.3 8.5 17.7 8 17.9 7.4 C17.4 7.7 16.9 7.9 16.3 8 C15.8 7.5 15.2 7.2 14.5 7.2 C13.1 7.2 12 8.3 12 9.7 C12 9.9 12 10.1 12.1 10.3 C10 10.2 8.2 9.2 6.9 7.7 C6.7 8.1 6.6 8.5 6.6 8.9 C6.6 9.8 7 10.5 7.7 11 C7.3 11 6.9 10.9 6.5 10.7 C6.5 11.9 7.4 12.9 8.5 13.1 C8.1 13.2 7.7 13.3 7.4 13.2 C7.7 14.2 8.6 14.9 9.7 14.9 C8.8 15.6 7.7 16 6.6 16 C6.4 16 6.2 16 6 16 C7.1 16.7 8.4 17.1 9.9 17.1 C14.5 17.1 17 13.3 17 10 V9.7 C17.4 9.3 17.8 8.9 18.2 8.4 Z" fill="#fff"/></svg>
<div class="a b" style="left:171.8px;top:670.61px;font-size:11.3px;line-height:11.3px;letter-spacing:-0.2px;color:#1b1b1b">Benjamin Reynolds</div>
<div class="a m" style="left:144px;top:696.61px;font-size:11.95px;line-height:11.95px;letter-spacing:-0.12px"><span style="letter-spacing:0.02px"><span class="lnk">@zylkertravels</span>, Awesome Service, thoroughly enjoyed the trip.</span></div>
<svg class="a" style="left:144px;top:722.5px" width="14" height="14" viewBox="0 0 14 14"><rect width="14" height="14" rx="3.2" fill="#5c5fec"/>
<circle cx="7" cy="7" r="3.7" fill="#c9cdf7"/><circle cx="7" cy="7" r="1.4" fill="none" stroke="#5a5fe2" stroke-width="0.9"/></svg>
<div class="a g" style="left:166.8px;top:723.98px;font-size:9.6px;line-height:9.6px;letter-spacing:0.35px">MENTION</div>
<div class="a" style="left:552.5px;top:672.0999999999999px;width:5px;height:5px;border-radius:50%;background:#3d9c68"></div>
<div class="a m" style="left:564.6px;top:668.96px;font-size:11.6px;line-height:11.6px;letter-spacing:-0.1px">Low</div>
<svg class="a" style="left:592.3px;top:671.5999999999999px" width="9.6" height="6.9"><path d="M2 2 L4.8 4.9 L7.6 2" fill="none" stroke="#777" stroke-width="1" stroke-linecap="round" stroke-linejoin="round"/></svg>
<div class="ua" style="top:665.5px"></div>
<svg class="a" style="left:694px;top:671.5px" width="13" height="13" viewBox="0 0 13 13"><g fill="none" stroke="#555" stroke-width="1.1" stroke-linecap="round">
<path d="M2 11.2 C2 9.4 3 8.4 4.3 8 C3.3 7.2 3 6.2 3 5 C3 2.8 4.4 1.2 6 1.2 C7.6 1.2 9 2.8 9 5 C9 6.2 8.7 7.2 7.7 8"/>
<path d="M2 11.2 H6.5"/><path d="M9.6 8.6 V12.4 M7.7 10.5 H11.5"/></g></svg>
<div class="a m" style="left:720.6px;top:671.53px;font-size:11.8px;line-height:11.8px;letter-spacing:0px">Unassigned</div>
<svg class="a" style="left:788px;top:673.6px" width="9.8" height="7.1"><path d="M2 2 L4.9 5.1 L7.8 2" fill="none" stroke="#777" stroke-width="1" stroke-linecap="round" stroke-linejoin="round"/></svg>
<div class="pill" style="top:665.7px"></div>
<div class="a " style="left:900.6px;top:671.90px;font-size:10.1px;line-height:10.1px;color:#454545;letter-spacing:-0.2px;-webkit-text-stroke:0.35px #454545">OPEN</div>
<svg class="a" style="left:932.6px;top:672.8px" width="9.4" height="6.9"><path d="M2 2 L4.7 4.9 L7.4 2" fill="none" stroke="#666" stroke-width="1.1" stroke-linecap="round" stroke-linejoin="round"/></svg>
<div class="a" style="left:1028px;top:674px;width:3px;height:1px;background:#222"></div><div class="a" style="left:1028px;top:675px;width:3px;height:1px;background:#999"></div>
<div class="a" style="left:0;top:42px;width:1.2px;height:698px;background:#eeeef0"></div>
<div class="a" style="left:1358.5px;top:42px;width:1.5px;height:698px;background:#f3f3f5"></div>
</body></html>
